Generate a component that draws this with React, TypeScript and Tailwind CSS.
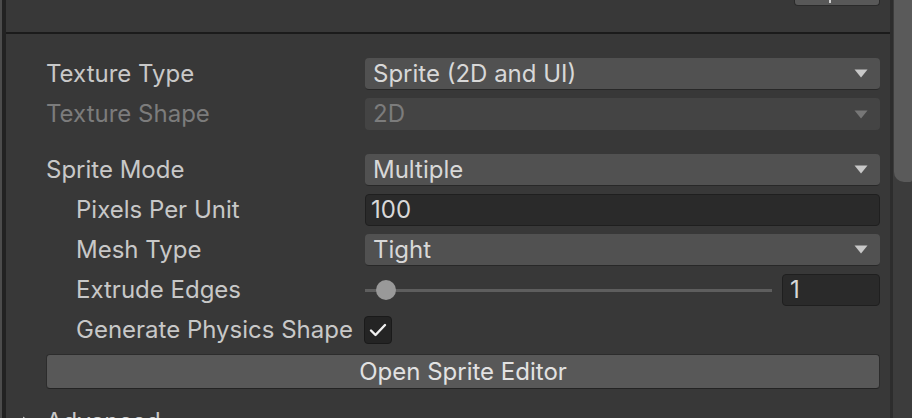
import React from 'react';

const Caret = ({ disabled }: { disabled?: boolean }) => (
  <svg width="14" height="9" viewBox="0 0 14 9" className="shrink-0">
    <path d="M0.5 0.5 H13.5 L7 8.5 Z" fill={disabled ? '#777777' : '#c8c8c8'} />
  </svg>
);

const Label = ({ text, indent, disabled }: { text: string; indent?: boolean; disabled?: boolean }) => (
  <div
    className={`w-[319px] shrink-0 whitespace-nowrap ${indent ? 'pl-[30px]' : ''} ${
      disabled ? 'text-[#7c7c7c]' : 'text-[#c8c8c8]'
    }`}
  >
    {text}
  </div>
);

const Dropdown = ({ value, disabled }: { value: string; disabled?: boolean }) => (
  <div
    className={`flex-1 h-[32px] flex items-center justify-between pl-[8px] pr-[12px] rounded-[4px] ${
      disabled
        ? 'bg-[#444444] text-[#7c7c7c]'
        : 'bg-[#515151] text-[#d8d8d8] border-b border-[#282828]'
    }`}
  >
    <span>{value}</span>
    <Caret disabled={disabled} />
  </div>
);

const Row = ({ children }: { children: React.ReactNode }) => (
  <div className="h-[32px] shrink-0 flex items-center">{children}</div>
);

export default function App() {
  return (
    <div
      className="w-[912px] h-[418px] overflow-hidden flex bg-[#383838] text-[24px] leading-none"
      style={{ fontFamily: 'Inter, "Noto Sans", sans-serif' }}
    >
      {/* left window edge */}
      <div className="w-[2px] shrink-0 bg-[#4c4c4c]" />
      <div className="w-[4px] shrink-0 bg-[#222222]" />

      <div className="flex-1 flex flex-col min-h-0">
        {/* header strip */}
        <div className="h-[32px] shrink-0 flex justify-end pr-[10px]">
          <div className="w-[86px] h-[7px] -mt-px bg-[#585858] border border-t-0 border-[#2a2a2a] rounded-b-[4px] flex justify-center">
            <div className="w-[2px] h-[4px] bg-[#cfcfcf] -ml-[14px]" />
          </div>
        </div>
        <div className="h-[2px] shrink-0 bg-[#1b1b1b]" />

        {/* inspector body */}
        <div className="pt-[24px] pl-[40px] pr-[10px] flex flex-col shrink-0">
          <div className="flex flex-col gap-[8px]">
            <Row>
              <Label text="Texture Type" />
              <Dropdown value="Sprite (2D and UI)" />
            </Row>
            <Row>
              <Label text="Texture Shape" disabled />
              <Dropdown value="2D" disabled />
            </Row>
          </div>

          <div className="mt-[24px] flex flex-col gap-[8px]">
            <Row>
              <Label text="Sprite Mode" />
              <Dropdown value="Multiple" />
            </Row>
            <Row>
              <Label text="Pixels Per Unit" indent />
              <div className="flex-1 h-[32px] flex items-center pl-[5px] bg-[#2a2a2a] border border-[#1f1f1f] rounded-[4px] text-[#d8d8d8]">
                100
              </div>
            </Row>
            <Row>
              <Label text="Mesh Type" indent />
              <Dropdown value="Tight" />
            </Row>
            <Row>
              <Label text="Extrude Edges" indent />
              <div className="flex-1 flex items-center gap-[10px]">
                <div className="flex-1 relative h-[20px] flex items-center">
                  <div className="w-full h-[3px] bg-[#5e5e5e]" />
                  <div className="absolute left-[11px] top-0 w-[20px] h-[20px] rounded-full bg-[#999999]" />
                </div>
                <div className="w-[98px] h-[32px] flex items-center pl-[7px] bg-[#2a2a2a] border border-[#1f1f1f] rounded-[4px] text-[#d8d8d8]">
                  1
                </div>
              </div>
            </Row>
            <Row>
              <div className="w-[319px] shrink-0 pl-[30px] text-[#c8c8c8] whitespace-nowrap">
                Generate Physics Shape
              </div>
              <div className="w-[28px] h-[28px] -ml-[1px] rounded-[4px] bg-[#242424] border border-[#1a1a1a] flex items-center justify-center">
                <svg width="18" height="14" viewBox="0 0 18 14">
                  <path
                    d="M2 7.5 L6.5 12 L16 2"
                    fill="none"
                    stroke="#f0f0f0"
                    strokeWidth="2.4"
                    strokeLinecap="round"
                    strokeLinejoin="round"
                  />
                </svg>
              </div>
            </Row>
            <button className="h-[35px] shrink-0 w-full rounded-[4px] bg-[#585858] border border-[#2c2c2c] border-b-[#232323] text-[#e2e2e2] flex items-center justify-center">
              Open Sprite Editor
            </button>
          </div>

          {/* collapsed foldout */}
          <div className="mt-[17px] h-[32px] shrink-0 flex items-center -ml-[24px]">
            <svg width="10" height="12" viewBox="0 0 10 12" className="mr-[14px]">
              <path d="M1 0.5 L9 6 L1 11.5 Z" fill="#bdbdbd" />
            </svg>
            <span className="text-[#c8c8c8]">Advanced</span>
          </div>
        </div>
      </div>

      {/* scroll bar */}
      <div className="w-[3px] shrink-0 bg-[#2d2d2d]" />
      <div className="w-[19px] shrink-0 bg-[#3c3c3c] flex flex-col">
        <div className="h-[182px] shrink-0 ml-[1px] bg-[#5a5a5a] rounded-bl-[10px] rounded-br-[2px]" />
      </div>
    </div>
  );
}
